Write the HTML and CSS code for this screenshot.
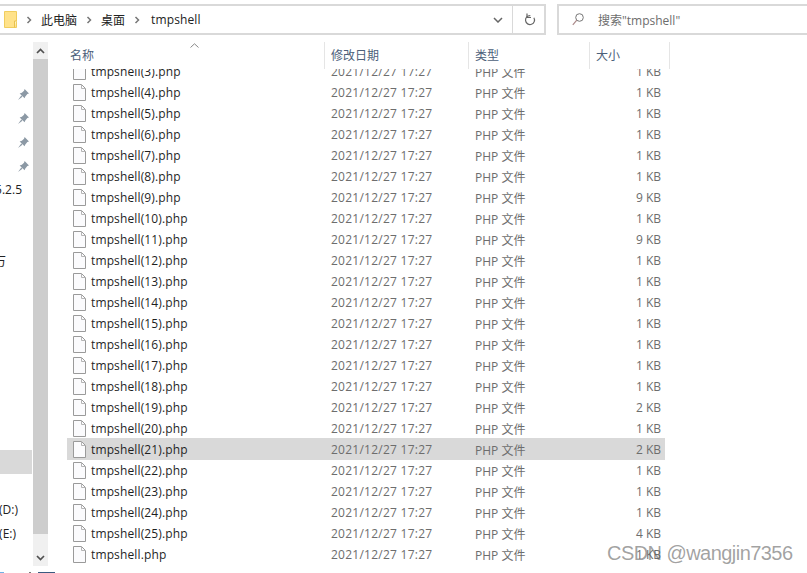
FILE: index.html
```html
<!DOCTYPE html>
<html lang="zh-CN">
<head>
<meta charset="utf-8">
<title>tmpshell</title>
<link rel="stylesheet" href="styles.css">
</head>
<body>
<div class="window">
  <header class="toolbar">
    <div class="address">
      <svg class="folder" width="13" height="17" viewBox="0 0 13 17"><path d="M.5.5H12.500V16.500H.5Z" fill="#ffe28a" stroke="#f0cd5e"/><path d="M10.500 16.500V10H12.500" fill="#fff3c4" stroke="#e8c14f"/></svg>
      <svg class="chev" width="6" height="8" viewBox="0 0 6 8"><path d="M1.500 1L4.500 4L1.500 7" fill="none" stroke="#777" stroke-width="1.500"/></svg>
      <span class="crumb">此电脑</span>
      <svg class="chev" width="6" height="8" viewBox="0 0 6 8"><path d="M1.500 1L4.500 4L1.500 7" fill="none" stroke="#777" stroke-width="1.500"/></svg>
      <span class="crumb">桌面</span>
      <svg class="chev" width="6" height="8" viewBox="0 0 6 8"><path d="M1.500 1L4.500 4L1.500 7" fill="none" stroke="#777" stroke-width="1.500"/></svg>
      <span class="crumb last">tmpshell</span>
      <span class="spacer"></span>
      <svg class="drop" width="10" height="6" viewBox="0 0 10 6"><path d="M1 1L5 5L9 1" fill="none" stroke="#666" stroke-width="1.500"/></svg>
      <span class="refresh">
        <svg width="12" height="13" viewBox="0 0 12 13"><path d="M6 2.500A4.500 4.500 0 1 1 2.300 4.500" fill="none" stroke="#666" stroke-width="1.200" transform="rotate(60 6 7)"/><path d="M3 .5V4.500H7" fill="none" stroke="#666" stroke-width="1.200"/></svg>
      </span>
    </div>
    <div class="search">
      <svg width="12" height="13" viewBox="0 0 12 13"><circle cx="7.500" cy="4.500" r="3.800" fill="none" stroke="#777"/><path d="M4.800 7.200L.8 11.800" stroke="#a88" stroke-width="1.200"/></svg>
      <span class="search-text">搜索"tmpshell"</span>
    </div>
  </header>
  <div class="main">
    <nav class="side">
      <div class="pins">
        <svg class="pin" width="11" height="11" viewBox="0 0 10 10"><path d="M6 0L10 4L8.500 4.500L6.500 7L6 8.500L1.500 4L3.500 3.500L5.500 1.500ZM3 6L0 10L4 7Z" fill="#8c99a5"/></svg>
        <svg class="pin" width="11" height="11" viewBox="0 0 10 10"><path d="M6 0L10 4L8.500 4.500L6.500 7L6 8.500L1.500 4L3.500 3.500L5.500 1.500ZM3 6L0 10L4 7Z" fill="#8c99a5"/></svg>
        <svg class="pin" width="11" height="11" viewBox="0 0 10 10"><path d="M6 0L10 4L8.500 4.500L6.500 7L6 8.500L1.500 4L3.500 3.500L5.500 1.500ZM3 6L0 10L4 7Z" fill="#8c99a5"/></svg>
        <svg class="pin" width="11" height="11" viewBox="0 0 10 10"><path d="M6 0L10 4L8.500 4.500L6.500 7L6 8.500L1.500 4L3.500 3.500L5.500 1.500ZM3 6L0 10L4 7Z" fill="#8c99a5"/></svg>
      </div>
      <div class="side-text ver">5.2.5</div>
      <div class="side-text wan">万</div>
      <div class="side-sel"></div>
      <div class="side-text drive-d">(D:)</div>
      <div class="side-text drive-e">(E:)</div>
    </nav>
    <div class="scrollbar">
      <div class="arrow up"><svg width="9" height="6" viewBox="0 0 9 6"><path d="M1 5L4.500 1.500L8 5" fill="none" stroke="#505050" stroke-width="1.700"/></svg></div>
      <div class="thumb"></div>
      <div class="arrow down"><svg width="9" height="6" viewBox="0 0 9 6"><path d="M1 1L4.500 4.500L8 1" fill="none" stroke="#505050" stroke-width="1.700"/></svg></div>
    </div>
    <section class="files">
      <div class="head">
        <svg class="sort" width="9" height="5" viewBox="0 0 9 5"><path d="M.5 4.500L4.500 .8L8.500 4.500" fill="none" stroke="#888"/></svg>
        <div class="col c-name">名称</div>
        <div class="col c-date">修改日期</div>
        <div class="col c-type">类型</div>
        <div class="col c-size">大小</div>
      </div>
      <div class="list" id="list"></div>
    </section>
  </div>
  <div class="status"><i class="frag f1"></i><i class="frag f2"></i><i class="frag f3"></i></div>
  <div class="watermark">CSDN @wangjin7356</div>
</div>
<script src="app.js"></script>
</body>
</html>
```
FILE: styles.css
```css
* { box-sizing: border-box; }
html, body { margin: 0; height: 100%; background: #fff; overflow: hidden; }
body { font: 12px "Open Sans", "Noto Sans CJK SC", sans-serif; color: #1a1a1a; }
.window { position: relative; width: 807px; height: 573px; padding-top: 4px; overflow: hidden; }
.toolbar { display: flex; height: 31px; gap: 11px; }
.address { width: 546px; display: flex; align-items: center; border: 2px solid #d9d9d9; border-left: 0; padding-left: 4px; }
.folder { margin-right: 9px; }
.chev { margin-right: 9px; }
.crumb { margin-right: 9px; font-size: 12px; color: #222; }
.crumb.last { margin-left: 2px; letter-spacing: .13px; }
.spacer { flex: 1; }
.drop { margin-right: 9px; }
.refresh { width: 32px; height: 100%; border-left: 1px solid #d9d9d9; display: flex; align-items: center; padding-left: 11px; }
.search { flex: 1; display: flex; align-items: center; border: 2px solid #d9d9d9; border-right: 0; padding-left: 13px; gap: 14px; color: #6d6d6d; }
.main { display: flex; height: 537px; }
.side { width: 33px; position: relative; flex: none; }
.pins { position: absolute; left: 18px; top: 54px; display: flex; flex-direction: column; gap: 13px; }
.pin { display: block; }
.side-text { position: absolute; color: #222; white-space: nowrap; line-height: 16px; }
.ver { right: 11px; top: 147px; }
.wan { right: 27px; top: 219px; }
.side-sel { position: absolute; left: 0; right: 1px; top: 415px; height: 24px; background: #d9d9d9; }
.drive-d { right: 15px; top: 467px; }
.drive-e { right: 17px; top: 491px; }
.scrollbar { width: 15px; flex: none; height: 524px; margin-top: 7px; background: #f0f0f0; display: flex; flex-direction: column; }
.arrow { display: flex; align-items: center; justify-content: center; flex: none; }
.up { height: 17px; }
.down { height: 32px; padding-top: 15px; }
.thumb { flex: 1; background: #cdcdcd; }
.files { flex: 1; position: relative; min-width: 0; }
.head { position: relative; display: flex; height: 27px; margin-top: 7px; color: #4c607a; background: #fff; z-index: 1; }
.col { padding: 4px 0 0 6px; border-left: 1px solid #e5e5e5; height: 27px; flex: none; }
.c-name { width: 258px; margin-left: 18px; padding-left: 4px; border-left: 0; }
.c-date { width: 144px; }
.c-type { width: 121px; }
.c-size { width: 81px; border-right: 1px solid #e5e5e5; }
.sort { position: absolute; left: 142px; top: 1px; }
.list { margin-top: -8px; height: 512px; overflow: hidden; padding-left: 19px; }
.row { display: flex; align-items: center; height: 21px; width: 598px; color: #6d6d6d; }
.row.sel { background: #d9d9d9; box-shadow: 0 -1px 0 #d9d9d9; }
.ico { margin-left: 6px; margin-right: 5px; flex: none; }
.n { width: 240px; color: #1f1f1f; flex: none; letter-spacing: .13px; }
.d { width: 144px; flex: none; letter-spacing: .25px; }
.t { width: 120px; flex: none; }
.s { width: 66px; text-align: right; flex: none; }
.status { display: flex; height: 1px; }
.frag { display: block; height: 1px; flex: none; }
.f1 { width: 4px; background: #6fb0e6; }
.f2 { width: 2px; margin-left: 25px; background: #777; }
.f3 { width: 17px; margin-left: 7px; background: #3a5a80; }
.watermark { position: absolute; left: 607px; top: 542px; font: 20px "Liberation Sans", sans-serif; color: rgba(100,100,100,.6); white-space: nowrap; letter-spacing: -.55px; }
```
FILE: app.js
```js
var sizes = {3:1,4:1,5:1,6:1,7:1,8:1,9:9,10:1,11:9,12:1,13:1,14:1,15:1,16:1,17:1,18:1,19:2,20:1,21:2,22:1,23:1,24:1,25:4};
var list = document.getElementById('list');
var ico = '<svg class="ico" width="13" height="17" viewBox="0 0 13 17"><path d="M.5.5H8.500L12.500 4.500V16.500H.5Z" fill="#fbfbfd" stroke="#9a9a9a"/><path d="M8.500.5V4.500H12.500" fill="none" stroke="#b5b5b5"/></svg>';
function row(name, size, sel) {
  return '<div class="row' + (sel ? ' sel' : '') + '">' + ico + '<span class="n">' + name + '</span><span class="d">2021/12/27 17:27</span><span class="t">PHP 文件</span><span class="s">' + size + ' KB</span></div>';
}
var html = '';
for (var i = 3; i <= 25; i++) html += row('tmpshell(' + i + ').php', sizes[i], i === 21);
html += row('tmpshell.php', 1, false);
list.innerHTML = html;
```
